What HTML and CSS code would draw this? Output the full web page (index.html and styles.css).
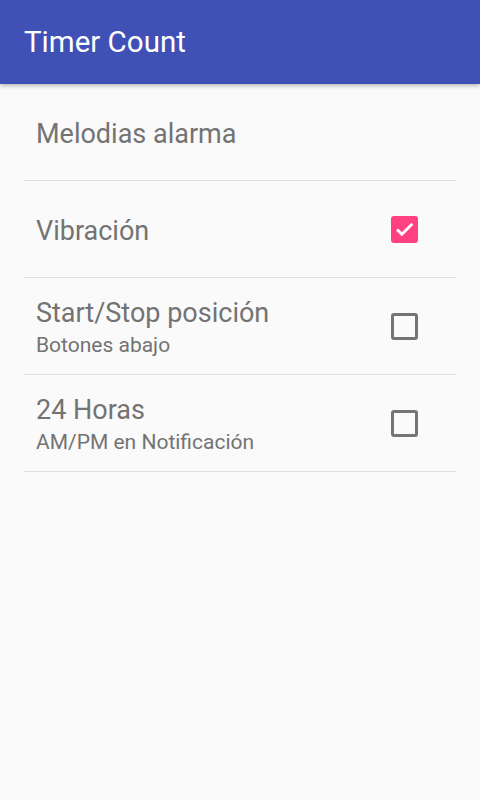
FILE: index.html
```html
<!DOCTYPE html>
<html lang="es">
<head>
  <meta charset="UTF-8">
  <meta name="viewport" content="width=device-width, initial-scale=1.0">
  <title>Timer Count</title>
  <link rel="stylesheet" href="styles.css">
</head>
<body>
  <header class="appbar">
    <h1>Timer Count</h1>
  </header>

  <ul class="prefs">
    <li class="pref">
      <div class="pref-text">
        <div class="pref-title">Melodias alarma</div>
      </div>
    </li>
    <li class="pref">
      <div class="pref-text">
        <div class="pref-title">Vibración</div>
      </div>
      <span class="check checked">
        <svg viewBox="0 0 24 24" width="24" height="24"><path d="M3.5 12.5l5.5 5.5L21 6" fill="none" stroke="#fff" stroke-width="3.2"/></svg>
      </span>
    </li>
    <li class="pref">
      <div class="pref-text">
        <div class="pref-title">Start/Stop posición</div>
        <div class="pref-sub">Botones abajo</div>
      </div>
      <span class="check"></span>
    </li>
    <li class="pref">
      <div class="pref-text">
        <div class="pref-title">24 Horas</div>
        <div class="pref-sub">AM/PM en Notificación</div>
      </div>
      <span class="check"></span>
    </li>
  </ul>
</body>
</html>
```

FILE: styles.css
```css
body {
  margin: 0;
  background: #fafafa;
  font-family: Roboto, "Noto Sans", sans-serif;
  height: 800px;
}
.appbar {
  background: #3f51b5;
  height: 84px;
  display: flex;
  align-items: center;
  padding: 0 24px;
  box-shadow: 0 2px 4px rgba(0, 0, 0, 0.25);
  position: relative;
}
.appbar h1 {
  margin: 0;
  color: #fff;
  font-size: 29.5px;
  font-weight: 400;
}
.prefs {
  list-style: none;
  margin: 0;
  padding: 0 24px;
}
.pref {
  display: flex;
  align-items: center;
  height: 96px;
  border-bottom: 1px solid #e0e0e0;
  padding: 0 38px 0 12px;
}
.pref-text {
  flex: 1;
  padding-top: 4px;
}
.pref-title {
  font-size: 27px;
  color: #737373;
  line-height: 32px;
}
.pref-sub {
  font-size: 21px;
  color: #737373;
  line-height: 28px;
  margin-top: 2px;
}
.check {
  width: 21px;
  height: 21px;
  border: 3px solid #757575;
  border-radius: 3px;
  display: flex;
  align-items: center;
  justify-content: center;
}
.check.checked {
  background: #ff4081;
  border-color: #ff4081;
}
```
